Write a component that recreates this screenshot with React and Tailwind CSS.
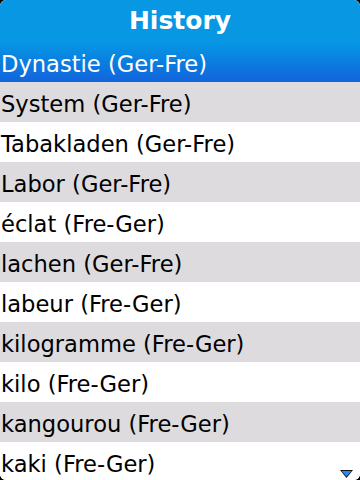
export default function App() {
  const items = [
    "System (Ger-Fre)",
    "Tabakladen (Ger-Fre)",
    "Labor (Ger-Fre)",
    "éclat (Fre-Ger)",
    "lachen (Ger-Fre)",
    "labeur (Fre-Ger)",
    "kilogramme (Fre-Ger)",
    "kilo (Fre-Ger)",
    "kangourou (Fre-Ger)",
    "kaki (Fre-Ger)",
  ];
  return (
    <div className="w-[360px] h-[480px] bg-black overflow-hidden">
      <div
        className="relative w-full h-full bg-white rounded-[6px] overflow-hidden"
        style={{ fontFamily: '"DejaVu Sans", sans-serif' }}
      >
        <div className="h-[42px] bg-[#0897e2] flex items-center justify-center pb-[2px]">
          <span className="text-white font-bold text-[25px] leading-none">History</span>
        </div>
        <div className="h-[40px] bg-gradient-to-b from-[#0897e4] to-[#1463dc] flex items-center pl-[1px] pt-[4px]">
          <span className="text-white text-[22.6px] leading-none">Dynastie (Ger-Fre)</span>
        </div>
        {items.map((t, i) => (
          <div
            key={t}
            className={
              "h-[40px] flex items-center pl-[1px] pt-[4px] " +
              (i % 2 === 0 ? "bg-[#dddbde]" : "bg-white")
            }
          >
            <span className="text-black text-[22.6px] leading-none">{t}</span>
          </div>
        ))}
        <svg
          className="absolute right-[7px] bottom-[2px]"
          width="13"
          height="8"
          viewBox="0 0 13 8"
        >
          <polygon points="0,0 13,0 6.5,8" fill="#111" />
          <polygon points="1.5,1 11.5,1 6.5,6.5" fill="#1e8ff0" />
        </svg>
      </div>
    </div>
  );
}
